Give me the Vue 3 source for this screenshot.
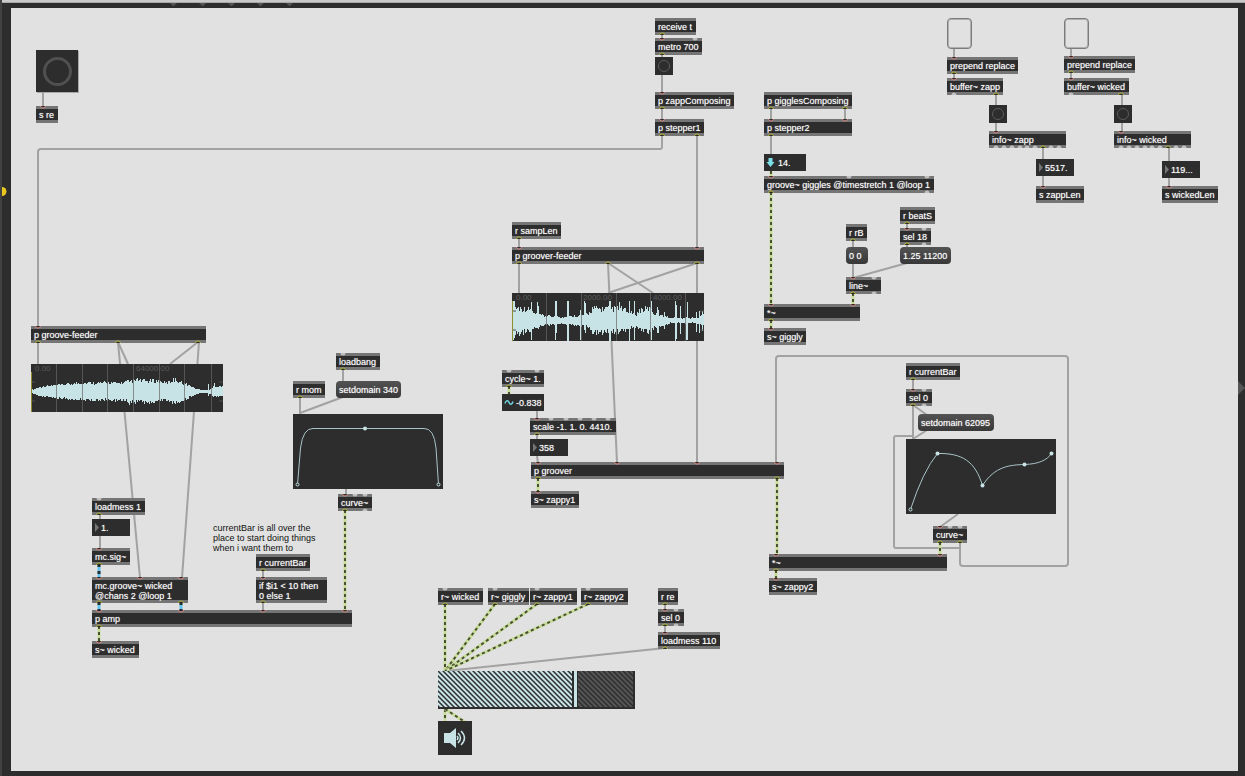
<script setup>
import { ref } from 'vue'

// Text objects: position and width, with inlet / outlet x positions.
// i / o are patched, ig / og are free.
const objects = [
  { t: 's re', x: 36, y: 106, w: 22, i: [43] },
  { t: 'receive t', x: 655, y: 18, w: 41, o: [662] },
  { t: 'metro 700', x: 655, y: 38, w: 47, i: [662], ig: [695], o: [662] },
  { t: 'p zappComposing', x: 655, y: 92, w: 79, i: [662], o: [662] },
  { t: 'p stepper1', x: 655, y: 119, w: 49, i: [662], o: [662, 697] },
  { t: 'p gigglesComposing', x: 764, y: 92, w: 88, o: [771, 845] },
  { t: 'p stepper2', x: 764, y: 119, w: 88, i: [771, 845], o: [771] },
  { t: 'groove~ giggles @timestretch 1 @loop 1', x: 764, y: 176, w: 170, i: [771], ig: [849, 927], o: [771], og: [927] },
  { t: 'prepend replace', x: 947, y: 57, w: 71, i: [954], o: [954] },
  { t: 'buffer~ zapp', x: 947, y: 78, w: 56, i: [954], o: [996], og: [954] },
  { t: 'info~ zapp', x: 989, y: 131, w: 77, i: [996], o: [1043], og: [996, 1004, 1012, 1020, 1027, 1035, 1051, 1059] },
  { t: 's zappLen', x: 1036, y: 186, w: 48, i: [1043] },
  { t: 'prepend replace', x: 1064, y: 56, w: 71, i: [1071], o: [1071] },
  { t: 'buffer~ wicked', x: 1064, y: 78, w: 65, i: [1071], o: [1121], og: [1071] },
  { t: 'info~ wicked', x: 1114, y: 131, w: 77, i: [1121], o: [1168], og: [1121, 1129, 1137, 1145, 1152, 1160, 1176, 1184] },
  { t: 's wickedLen', x: 1162, y: 186, w: 56, i: [1169] },
  { t: 'r sampLen', x: 512, y: 222, w: 49, o: [519] },
  { t: 'p groover-feeder', x: 512, y: 247, w: 192, i: [519, 697], o: [519, 608, 697] },
  { t: 'r rB', x: 846, y: 224, w: 21, o: [853] },
  { t: 'r beatS', x: 900, y: 207, w: 35, o: [907] },
  { t: 'sel 18', x: 900, y: 228, w: 31, i: [907], ig: [924], o: [907], og: [924] },
  { t: 'line~', x: 846, y: 277, w: 35, i: [853], ig: [874], o: [853], og: [874] },
  { t: '*~', x: 764, y: 304, w: 96, i: [771, 853], o: [771] },
  { t: 's~ giggly', x: 764, y: 328, w: 42, i: [771] },
  { t: 'p groove-feeder', x: 31, y: 326, w: 175, i: [38], o: [38, 118, 198] },
  { t: 'loadbang', x: 336, y: 353, w: 44, ig: [343], o: [343] },
  { t: 'r mom', x: 293, y: 381, w: 32, o: [300] },
  { t: 'curve~', x: 338, y: 494, w: 34, i: [345], ig: [355, 365], o: [345], og: [365] },
  { t: 'cycle~ 1.', x: 502, y: 370, w: 42, ig: [509, 537], o: [509] },
  { t: 'scale -1. 1. 0. 4410.', x: 530, y: 418, w: 86, i: [537], ig: [551, 566, 580, 594, 608], o: [537] },
  { t: 'p groover', x: 531, y: 462, w: 253, i: [538, 617, 697, 777], o: [538, 777] },
  { t: 's~ zappy1', x: 531, y: 491, w: 48, i: [538] },
  { t: 'loadmess 1', x: 92, y: 498, w: 53, ig: [99], o: [99] },
  { t: 'mc.sig~', x: 92, y: 548, w: 38, i: [99], o: [99] },
  { t: 'mc.groove~ wicked\n@chans 2 @loop 1', x: 92, y: 577, w: 96, h: 26, i: [99, 140, 181], o: [99, 181] },
  { t: 'r currentBar', x: 256, y: 554, w: 54, o: [263] },
  { t: 'if $i1 < 10 then\n0 else 1', x: 256, y: 577, w: 71, h: 26, i: [263], o: [263] },
  { t: 'p amp', x: 92, y: 610, w: 260, i: [99, 181, 263, 345], o: [99] },
  { t: 's~ wicked', x: 92, y: 641, w: 47, i: [99] },
  { t: 'r currentBar', x: 906, y: 363, w: 54, o: [913] },
  { t: 'sel 0', x: 906, y: 389, w: 26, i: [913], ig: [924], o: [913], og: [924] },
  { t: 'curve~', x: 933, y: 526, w: 34, i: [940], ig: [950, 960], o: [940, 960] },
  { t: '*~', x: 769, y: 554, w: 178, i: [776, 940], o: [776] },
  { t: 's~ zappy2', x: 769, y: 578, w: 48, i: [776] },
  { t: 'r~ wicked', x: 438, y: 588, w: 45, ig: [445], o: [445] },
  { t: 'r~ giggly', x: 488, y: 588, w: 41, ig: [495], o: [495] },
  { t: 'r~ zappy1', x: 530, y: 588, w: 47, ig: [537], o: [537] },
  { t: 'r~ zappy2', x: 581, y: 588, w: 47, ig: [588], o: [588] },
  { t: 'r re', x: 658, y: 588, w: 20, o: [665] },
  { t: 'sel 0', x: 658, y: 609, w: 26, i: [665], ig: [676], o: [665], og: [676] },
  { t: 'loadmess 110', x: 658, y: 632, w: 62, i: [665], o: [665] },
]

const messages = [
  { t: 'setdomain 340', x: 336, y: 381, w: 65 },
  { t: '0 0', x: 846, y: 247, w: 22 },
  { t: '1.25 11200', x: 900, y: 247, w: 51 },
  { t: 'setdomain 62095', x: 918, y: 414, w: 76 },
]

const numbers = ref([
  { v: '14.', k: 'arrow', x: 764, y: 154, w: 42, label: 'Giggles position' },
  { v: '-0.838', k: 'sine', x: 502, y: 394, w: 42, label: 'Cycle value' },
  { v: '358', k: 'tri', x: 530, y: 439, w: 38, label: 'Scaled value' },
  { v: '1.', k: 'tri', x: 92, y: 519, w: 38, label: 'Signal value' },
  { v: '5517.', k: 'tri', x: 1036, y: 159, w: 38, label: 'Zapp length' },
  { v: '119...', k: 'tri', x: 1162, y: 161, w: 38, label: 'Wicked length' },
])

const bangs = [
  { x: 36, y: 50, w: 42, h: 42, big: true },
  { x: 655, y: 57, w: 18, h: 18 },
  { x: 989, y: 105, w: 18, h: 18 },
  { x: 1114, y: 105, w: 18, h: 18 },
]

const drops = [
  { x: 947, y: 18, w: 25, h: 31 },
  { x: 1064, y: 18, w: 25, h: 31 },
]

const cables = [
  'M43 92V107', 'M662 34V39', 'M662 54V93', 'M662 108V120',
  'M662 135V147Q662 149 660 149H41Q38 149 38 152V327',
  'M697 135V248', 'M771 108V120', 'M845 108V120', 'M771 135V154',
  'M954 49V58', 'M954 73V79', 'M996 94V132', 'M1043 147V187',
  'M1071 49V57', 'M1071 72V79', 'M1122 94V132', 'M1169 147V187',
  'M519 238V248', 'M519 263V293', 'M608 263L617 463', 'M608 263L653 293',
  'M697 263L608 293', 'M697 263V463', 'M853 240V278', 'M907 223V229',
  'M907 244V248', 'M907 263L853 278', 'M38 342V364', 'M118 342L128 364',
  'M118 342L140 578', 'M198 342L170 364', 'M199 342L182 578',
  'M343 369V382', 'M300 397V414', 'M343 397L300 413', 'M346 489V495',
  'M537 411V419', 'M537 434V440', 'M537 456L538 463', 'M100 514V520',
  'M100 536V549', 'M263 570V578', 'M263 602V611', 'M913 379V390',
  'M913 405V439', 'M913 405L927 415', 'M927 430L913 439',
  'M958 514L940 527', 'M913 436H896Q894 436 894 438V546Q894 548 896 548H960',
  'M960 542V563Q960 566 963 566H1065Q1068 566 1068 563V359Q1068 356 1065 356H779Q776 356 776 359V463',
  'M665 604V610', 'M665 625V633', 'M665 648L446 671',
]

const signals = [
  'M771 171V177', 'M771 192V305', 'M771 320V329', 'M853 293V305',
  'M509 386V394', 'M538 478V492', 'M777 478V555', 'M776 570V579',
  'M940 542V555', 'M345 510V611', 'M99 626V642', 'M445 604V671',
  'M495 604L445 671', 'M537 604L445 671', 'M588 604L445 671',
  'M445 709V722', 'M445 709L465 722',
]

const multis = ['M99 564V578', 'M99 602V611', 'M181 602V611']

// Piecewise envelope with a deterministic grain, drawn as mirrored columns.
function wave(width, mid, points, spikes, grain) {
  let d = ''
  for (let x = 1; x < width; x++) {
    let n = 1
    while (n < points.length - 1 && points[n][0] < x) n++
    const [x0, a0] = points[n - 1]
    const [x1, a1] = points[n]
    const base = a0 + ((a1 - a0) * (x - x0)) / (x1 - x0)
    const up = Math.abs(Math.sin(x * 12.9898) * 43758.5453) % 1
    const down = Math.abs(Math.sin(x * 78.233) * 12543.123) % 1
    let top = base * (1 - grain / 2 + grain * up)
    let bottom = base * (1 - grain / 2 + grain * down)
    const s = spikes.find(k => x === k[0])
    if (s) {
      top = s[1]
      bottom = s[2]
    }
    d += `M${x} ${Math.round(mid - top)}h1V${Math.round(mid + bottom) + 1}h-1z`
  }
  return d
}

const waves = [
  {
    x: 31, y: 364, w: 192, h: 48, grid: [25, 51, 76, 102, 128, 153, 180],
    labels: [[4, '0.00'], [105, '64000.00']],
    path: wave(192, 27, [[0, 1], [8, 4], [30, 6], [48, 8], [90, 8], [100, 10], [125, 10], [135, 8], [144, 11], [154, 7], [163, 3], [170, 1], [176, 1], [179, 2], [183, 5], [192, 4]], [[98, 9, 13], [106, 13, 10], [121, 12, 10], [142, 13, 9], [177, 7, 4], [183, 8, 4]], 0.4),
  },
  {
    x: 512, y: 293, w: 192, h: 48, grid: [34, 69, 104, 138, 173],
    labels: [[4, '0.00'], [71, '2000.00'], [141, '4000.00']],
    path: wave(192, 27, [[0, 13], [18, 10], [22, 6], [32, 4], [50, 3], [65, 4], [76, 6], [80, 11], [110, 11], [116, 7], [124, 6], [128, 10], [137, 11], [142, 6], [152, 4], [158, 2], [174, 2], [184, 2], [192, 5]], [[1, 19, 19], [2, 19, 17], [19, 18, 19], [25, 18, 7], [26, 14, 8], [43, 19, 19], [44, 19, 12], [55, 19, 20], [56, 19, 20], [68, 10, 19], [72, 19, 9], [73, 17, 12], [97, 19, 20], [98, 19, 20], [107, 18, 11], [117, 19, 20], [122, 19, 19], [139, 19, 19], [145, 13, 12], [146, 10, 12], [152, 8, 8], [163, 19, 20], [164, 15, 18], [168, 14, 13], [174, 3, 19], [175, 18, 19], [184, 8, 11], [187, 9, 12], [190, 9, 10]], 0.6),
  },
]

const curves = [
  {
    x: 293, y: 414, w: 150, h: 75, path: 'M4.5 70.5L7.5 34Q10 14 20 14.500H131Q141 14 143 34L145.500 70.500',
    open: [[4.5, 70.5], [145.5, 70.5]], dots: [[72, 14.5]],
  },
  {
    x: 906, y: 439, w: 150, h: 75, path: 'M4.5 70.5Q17 32 31.5 14.500C56 14 69 22 76.500 46.500C89 27 104 26 118.500 25.500C133 25 141 21 145.500 14.500',
    open: [[4.5, 70.5]], dots: [[31.5, 14.5], [76.5, 46.5], [118.5, 25.5], [145.5, 14.5]],
  },
]

const marks = [173, 202, 231, 260, 289]
const gain = ref(110)
const place = n => ({ left: `${n.x}px`, top: `${n.y}px`, width: `${n.w}px`, height: n.h ? `${n.h}px` : null })
</script>

<template>
  <main class="window">
    <div class="toolbar"></div>
    <div class="body">
      <div class="canvas"></div>
    </div>

    <div class="patch">
      <svg class="layer" aria-hidden="true">
        <rect class="rail" x="0" y="0" width="2" height="100%" />
        <path v-for="m in marks" :key="m" class="mark" :d="`M${m - 3} 3h7l-3 3h-1z`" />
        <path class="pin" d="M2 187a4.500 4.500 0 0 1 0 9z" />
        <path v-for="c in cables" :key="c" class="cable" :d="c" />
        <g v-for="c in signals" :key="c">
          <path class="signal" :d="c" />
          <path class="signal-dash" :d="c" />
        </g>
        <g v-for="c in multis" :key="c">
          <path class="multi" :d="c" />
          <path class="multi-dash" :d="c" />
        </g>
      </svg>

      <div v-for="(o, k) in objects" :key="k" class="object" :style="place(o)">{{ o.t }}</div>
      <button v-for="m in messages" :key="m.t" type="button" class="message" :style="place(m)">{{ m.t }}</button>

      <div v-for="n in numbers" :key="n.label" class="number" :class="n.k" :style="place(n)">
        <svg v-if="n.k === 'tri'" class="glyph" width="12" height="17"><path class="glyph-tri" d="M3 4l4 4.500-4 4.500z" /></svg>
        <svg v-else-if="n.k === 'sine'" class="glyph" width="12" height="17"><path class="glyph-sine" d="M3 9.500C4 6 6 6 7 8.500S10 11 11 7.500" /></svg>
        <svg v-else class="glyph" width="12" height="17"><path class="glyph-arrow" d="M4.500 4h4v4h2L6.500 13 2.500 8h2z" /></svg>
        <input v-model="n.v" type="text" class="field" :aria-label="n.label" />
      </div>

      <button v-for="(b, k) in bangs" :key="k" type="button" class="bang" :class="{ big: b.big }" :style="place(b)" aria-label="Bang"></button>
      <div v-for="d in drops" :key="d.x" class="drop" :style="place(d)"></div>

      <svg v-for="w in waves" :key="w.x" class="panel" :style="place(w)">
        <path class="wave" :d="w.path" />
        <rect v-for="g in w.grid" :key="g" class="grid" :x="g" y="0" width="1" height="48" />
        <path class="tick" d="M0 18h4M0 37h4M188 18h4M188 37h4" />
        <rect class="cursor" x="0" y="8" width="1" height="40" />
        <text v-for="l in w.labels" :key="l[1]" class="ruler" :x="l[0]" y="7">{{ l[1] }}</text>
      </svg>

      <svg v-for="c in curves" :key="c.x" class="panel" :style="place(c)">
        <path class="curve" :d="c.path" />
        <circle v-for="p in c.dots" :key="p[0]" class="dot" :cx="p[0]" :cy="p[1]" r="2" />
        <circle v-for="p in c.open" :key="p[0]" class="open" :cx="p[0]" :cy="p[1]" r="1.500" />
      </svg>

      <p class="comment">currentBar is all over the<br />place to start doing things<br />when i want them to</p>

      <div class="gain">
        <svg class="gain-art" aria-hidden="true">
          <defs>
            <pattern id="hatch" width="5" height="5" patternUnits="userSpaceOnUse">
              <path d="M-1 -1L6 6M-1 4L1 6M4 -1L6 1" />
            </pattern>
          </defs>
          <rect class="level" x="0" y="0" width="134" height="36" />
          <rect class="rest" x="140" y="0" width="55" height="36" />
          <rect fill="url(#hatch)" x="0" y="0" width="195" height="36" />
          <rect class="notch" x="134" y="0" width="6" height="36" />
        </svg>
        <input v-model="gain" type="range" min="0" max="157" aria-label="Gain" class="gain-input" />
      </div>

      <button type="button" class="speaker" aria-label="Audio on">
        <svg width="34" height="34" viewBox="0 0 34 34">
          <path class="cone" d="M6 12h6l6-5v20l-6-5H6z" />
          <path class="arc" d="M19 15q2 2 0 4M20 12q5 5 0 10M23 10q7 7 0 14" />
        </svg>
      </button>

      <svg class="layer ports" aria-hidden="true">
        <g v-for="(o, k) in objects" :key="k">
          <path v-for="p in o.ig" :key="'a' + p" class="free" :d="`M${p - 2.5} ${o.y}a2.500 2.500 0 0 0 5 0z`" />
          <path v-for="p in o.og" :key="'b' + p" class="free" :d="`M${p - 2.5} ${o.y + (o.h || 17)}a2.500 2.500 0 0 1 5 0z`" />
          <path v-for="p in o.i" :key="'c' + p" class="inlet" :d="`M${p - 2.5} ${o.y}a2.500 2 0 0 0 5 0`" />
          <path v-for="p in o.o" :key="'d' + p" class="outlet" :d="`M${p - 2.5} ${o.y + (o.h || 17)}a2.500 2 0 0 1 5 0`" />
        </g>
      </svg>
      <svg class="expander" width="7" height="14" aria-hidden="true"><path class="mark" d="M0 0l7 7-7 7z" /></svg>
    </div>
  </main>
</template>

<style>
body {
  margin: 0;
  background: #2d2d2d;
}
</style>

<style scoped>
.window {
  position: relative;
  display: flex;
  flex-direction: column;
  min-height: 100vh;
  overflow: hidden;
  background: #2d2d2d;
  font-family: "Liberation Sans", Arial, sans-serif;
  font-size: 9px;
  line-height: 10px;
}
.toolbar {
  height: 2px;
  background: #cacaca;
  border-bottom: 1px solid #a8a8a8;
}
.body {
  flex: 1;
  display: flex;
  padding: 5px 7px 5px 11px;
}
.canvas {
  flex: 1;
  background: #e1e1e1;
}
.patch {
  position: absolute;
  inset: 0;
}
.layer {
  position: absolute;
  inset: 0;
  width: 100%;
  height: 100%;
}
.ports {
  pointer-events: none;
}
.rail { fill: #424242; }
.mark { fill: #555; }
.pin { fill: #ecc81f; }
.cable, .signal, .signal-dash, .multi, .multi-dash {
  fill: none;
  stroke: #a2a2a2;
  stroke-width: 2;
}
.signal {
  stroke: #c6dc98;
  stroke-width: 3;
}
.signal-dash {
  stroke: #4a5032;
  stroke-dasharray: 3 3;
}
.multi {
  stroke: #5fc4f0;
  stroke-width: 3;
}
.multi-dash {
  stroke: #2d2d2d;
  stroke-width: 3;
  stroke-dasharray: 3 4;
}
.object, .message, .number, .bang, .drop, .panel, .gain, .speaker, .comment {
  position: absolute;
  box-sizing: border-box;
  margin: 0;
}
.object, .message, .field {
  color: #fff;
  text-shadow: 0 0 1px rgba(255, 255, 255, 0.6);
}
.object {
  min-height: 17px;
  padding: 1px 3px 0;
  border-top: 3px solid #757575;
  border-bottom: 3px solid #757575;
  background: #2d2d2d;
  line-height: 10px;
  white-space: pre;
}
.message {
  height: 17px;
  padding: 0 3px;
  border: 0;
  border-radius: 4px;
  background: linear-gradient(#535353, #383838);
  font: inherit;
  text-align: left;
  white-space: nowrap;
}
.number {
  display: flex;
  height: 17px;
  background: #2d2d2d;
}
.glyph {
  position: absolute;
  left: 0;
  top: 0;
}
.glyph-tri { fill: #757575; }
.glyph-sine {
  fill: none;
  stroke: #6fd3de;
  stroke-width: 1.5;
}
.glyph-arrow { fill: #7be0ea; }
.field {
  flex: 1;
  min-width: 0;
  padding: 0 0 0 9px;
  border: 0;
  background: transparent;
  font: inherit;
}
.arrow .field, .sine .field { padding-left: 14px; }
.bang {
  display: grid;
  place-items: center;
  padding: 0;
  border: 0;
  background: #2d2d2d;
}
.bang::before {
  content: "";
  box-sizing: border-box;
  width: 12px;
  height: 12px;
  border: 1px solid #5a5a5a;
  border-radius: 50%;
}
.bang.big { box-shadow: 1px 1px 0 #a8a8a8; }
.bang.big::before {
  width: 29px;
  height: 29px;
  border: 3px solid #505050;
}
.drop {
  border: 1px solid #7c7c7c;
  border-radius: 4px;
  box-shadow: inset 0 0 0 1px #b0b0b0;
}
.panel {
  background: #2d2d2d;
  overflow: hidden;
}
.wave { fill: #c7e3e6; }
.grid { fill: #666; fill-opacity: 0.7; }
.tick { stroke: #505050; }
.cursor { fill: #8d8d30; }
.ruler {
  fill: #5c5c5c;
  font-size: 8px;
}
.curve {
  fill: none;
  stroke: #a9c4c7;
}
.dot { fill: #c7e3e6; }
.open {
  fill: #2d2d2d;
  stroke: #c7e3e6;
}
.comment {
  left: 213px;
  top: 523px;
  color: #111;
  white-space: nowrap;
}
.gain {
  left: 438px;
  top: 671px;
  width: 197px;
  height: 38px;
  background: #2d2d2d;
}
.gain-art {
  display: block;
  width: 197px;
  height: 38px;
}
.gain-art pattern path {
  stroke: #2d2d2d;
  stroke-width: 1.5;
}
.level { fill: #c7e3e6; }
.rest { fill: #555; }
.notch { fill: #2d2d2d; }
.gain-input {
  position: absolute;
  inset: 0 0 2px;
  width: 100%;
  height: 36px;
  margin: 0;
  appearance: none;
  background: transparent;
}
.gain-input::-webkit-slider-thumb {
  appearance: none;
  width: 3px;
  height: 36px;
  background: #c7e3e6;
}
.speaker {
  left: 438px;
  top: 721px;
  width: 34px;
  height: 34px;
  padding: 0;
  border: 0;
  background: #2d2d2d;
}
.speaker svg { display: block; }
.cone { fill: #c7e3e6; }
.arc {
  fill: none;
  stroke: #c7e3e6;
  stroke-width: 1.5;
}
.free { fill: #c0c0c0; }
.inlet {
  fill: #2d2d2d;
  stroke: #d98c86;
}
.outlet {
  fill: #2d2d2d;
  stroke: #b4b83c;
}
.expander {
  position: absolute;
  right: 0;
  top: 381px;
}
</style>
